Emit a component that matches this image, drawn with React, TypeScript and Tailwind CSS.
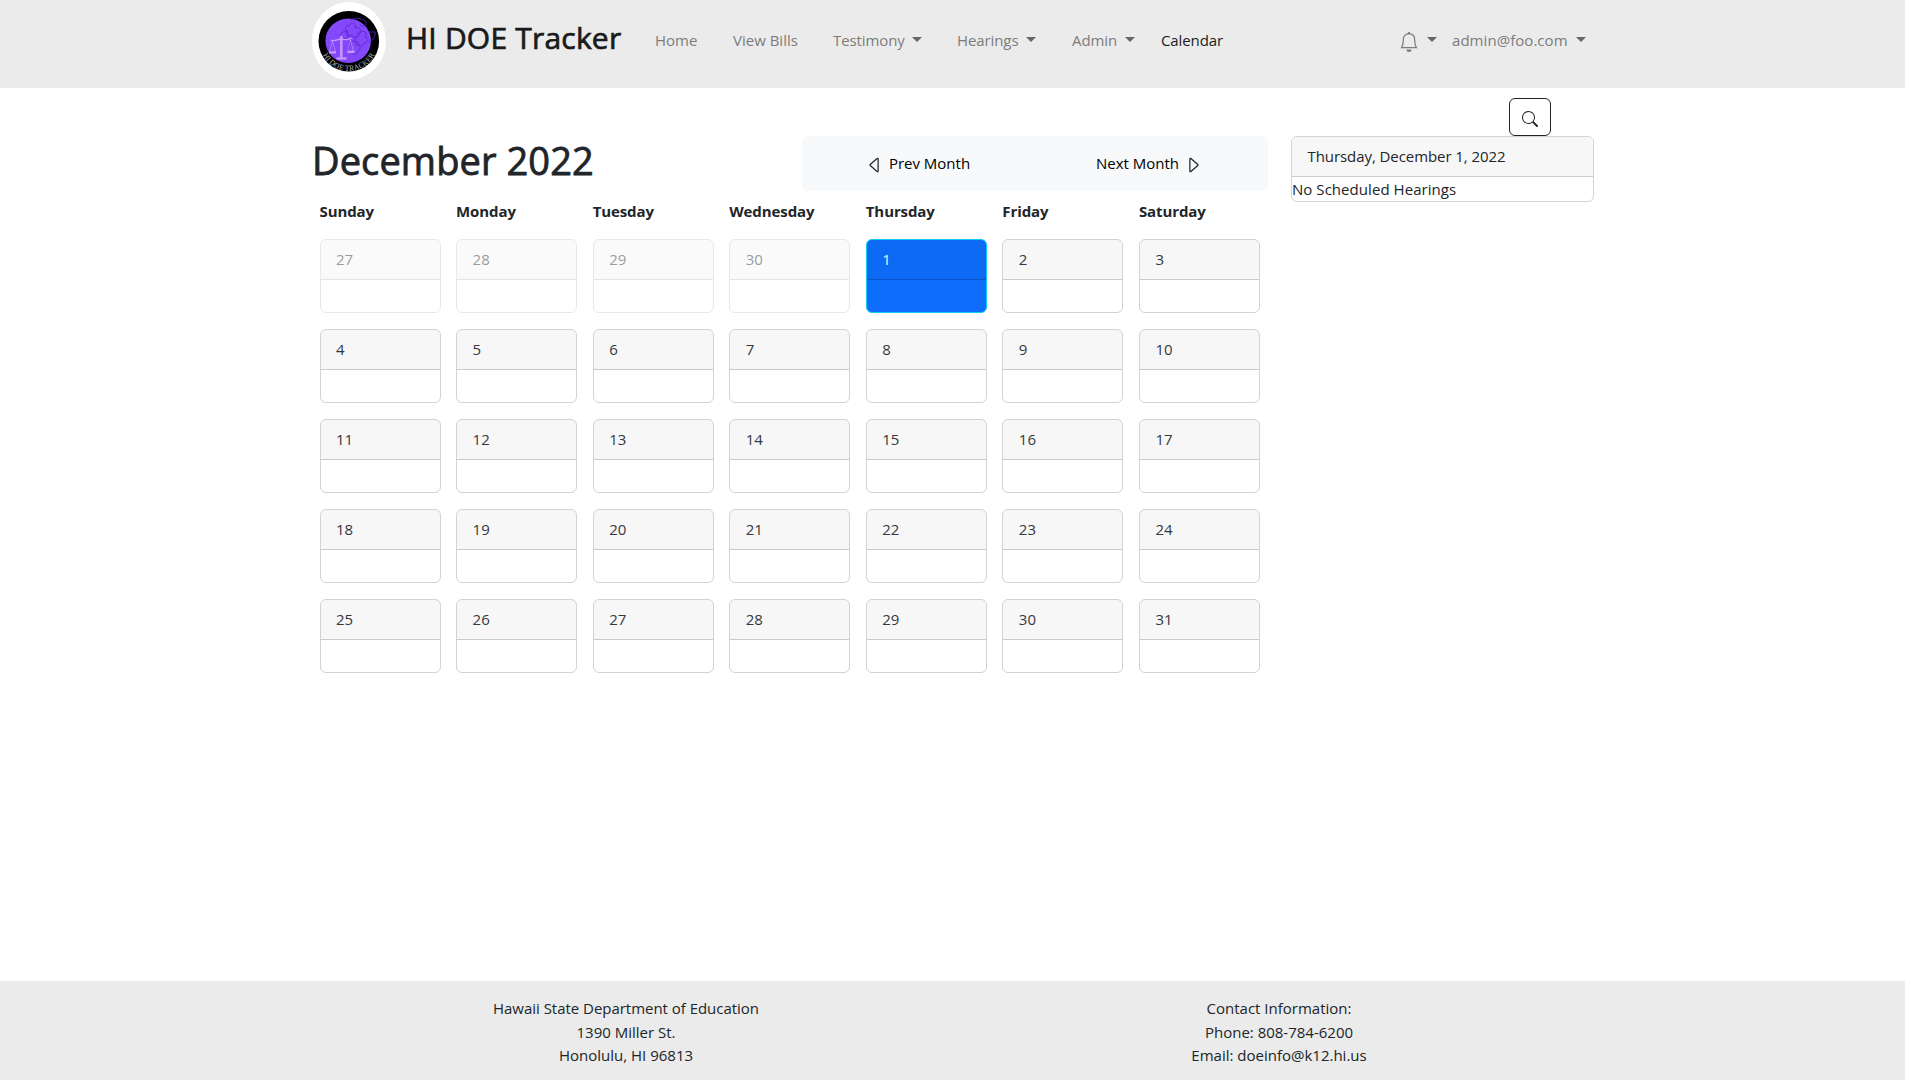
import React from "react";
import { BsBell, BsCaretLeft, BsCaretRight, BsSearch } from "react-icons/bs";

const weekdays = ["Sunday", "Monday", "Tuesday", "Wednesday", "Thursday", "Friday", "Saturday"];

type Day = { label: number; kind: "outside" | "selected" | "normal" };

const days: Day[] = [
  ...[27, 28, 29, 30].map((label): Day => ({ label, kind: "outside" })),
  ...Array.from({ length: 31 }, (_, i): Day => ({ label: i + 1, kind: i === 0 ? "selected" : "normal" })),
];

const cardStyles = {
  outside: "border-[#d3d3d3] bg-white text-[#212529] opacity-50",
  selected: "border-[#0dcaf0] bg-[#0d6efd] text-white",
  normal: "border-[#d3d3d3] bg-white text-[#212529]",
};

function Caret() {
  return <span className="-mt-[2px] h-0 w-0 border-x-[5px] border-t-[5px] border-x-transparent border-t-[#666]" />;
}

function Logo() {
  return (
    <svg className="h-[78px] w-[74px]" viewBox="0 0 74 78">
      <defs>
        <path id="motto" d="M10 46 A 27.500 27.500 0 0 0 63.500 46" />
      </defs>
      <ellipse cx="37" cy="39" rx="37" ry="39" fill="#fff" />
      <circle cx="36.8" cy="39.2" r="30.3" fill="#000" />
      <ellipse cx="36.2" cy="38.8" rx="22.8" ry="22.2" fill="#8448fb" />
      <g fill="none" stroke="#5a22c8" strokeWidth="0.8">
        <path d="M37 24c3-6 8-2 6 2c5-2 8 3 3 5c2 4-4 6-6 2c-4 3-8-1-4-4c-4-1-3-6 1-5z" />
        <path d="M48 31c4-4 8 0 5 4c4 1 4 6-1 6c-1 4-6 3-6-1c-4 0-4-5 0-6z" />
        <path d="M38 41c3-4 7-1 6 2c4-1 6 4 2 6c0 4-5 4-6 1c-4 1-6-3-3-5z" />
        <path d="M30 31c2-3 6-2 6 1c2 3-2 6-4 4c-4 0-5-3-2-5z" />
        <path d="M39 18c4-3 12-2 15 2c2 4-3 5-6 3M57 30h6c1 4-2 8-6 10" />
      </g>
      <g stroke="#c99bff" strokeWidth="1.3" fill="none">
        <path d="M18.500 38c4 2 7-1 10.500-1s6.500 2 10.500-1" />
        <path d="M29.300 34v22" strokeWidth="2.400" />
        <path d="M24.500 56.500h10" strokeWidth="2.200" />
        <path d="M20.500 39l-3 11M20.500 39l3 11M38.500 38l-3 11M38.500 38l3 11" strokeWidth="0.6" />
        <path d="M17 50.300h7M35.500 49.800h7" strokeWidth="2.200" />
      </g>
      <text fill="#b5b5b5" fontSize="8" fontFamily="Liberation Serif, serif">
        <textPath href="#motto" startOffset="50%" textAnchor="middle" dominantBaseline="middle" textLength="60" lengthAdjust="spacingAndGlyphs">
          HI DOE TRACKER
        </textPath>
      </text>
    </svg>
  );
}

function Header() {
  return (
    <header className="flex h-[88px] items-start bg-[#ebebeb] pl-[312px] text-[#7c7c7c]">
      <div className="mt-[2px]">
        <Logo />
      </div>
      <h1 className="mt-[16px] ml-[20px] w-[249px] text-[30px] leading-[44px] font-medium tracking-[0.2px] whitespace-nowrap text-[#1a1a1a] [-webkit-text-stroke:0.7px_#1a1a1a]">
        HI DOE Tracker
      </h1>
      <nav className="mt-[28px] flex leading-6 whitespace-nowrap">
        <a className="w-[78px]">Home</a>
        <a className="w-[100px]">View Bills</a>
        <a className="flex w-[124px] items-center gap-[7px] tracking-[-0.1px]">Testimony <Caret /></a>
        <a className="flex w-[115px] items-center gap-[8px] tracking-[-0.1px]">Hearings <Caret /></a>
        <a className="flex w-[89px] items-center gap-[8px] tracking-[-0.1px]">Admin <Caret /></a>
        <a className="w-[238px] tracking-[-0.1px] text-[#1c1c1c]">Calendar</a>
        <a className="flex w-[53px] items-center gap-[8px]"><BsBell className="mt-[4px] size-5" /><Caret /></a>
        <a className="flex items-center gap-2 tracking-[0.05px]">admin@foo.com <Caret /></a>
      </nav>
    </header>
  );
}

function DayCard({ day }: { day: Day }) {
  return (
    <div className={`h-[74.25px] overflow-hidden rounded-md border ${cardStyles[day.kind]}`}>
      <div className="h-[40.5px] border-b border-black/18 bg-black/3 px-[15.5px] pt-[7.5px] leading-6">
        <span className="opacity-90">{day.label}</span>
      </div>
    </div>
  );
}

function Calendar() {
  return (
    <section className="w-[956px] pt-[48px]">
      <div className="flex h-[55px] justify-between">
        <h2 className="text-[38px] leading-[48px] font-medium tracking-[0.1px] whitespace-nowrap [-webkit-text-stroke:0.8px_#212529]">
          December 2022
        </h2>
        <div className="flex w-[466px] items-center rounded-md bg-[#f8f9fa] text-black">
          <button className="flex w-[233px] items-center justify-center gap-[4px] pr-[2px]">
            <BsCaretLeft className="mt-[2px] size-5 text-[#212529]" />
            Prev Month
          </button>
          <button className="flex w-[233px] items-center justify-center gap-[4px] pr-[4px]">
            Next Month
            <BsCaretRight className="mt-[2px] size-5 text-[#212529]" />
          </button>
        </div>
      </div>
      <div className="mt-[8px] grid grid-cols-7 leading-6 font-bold tracking-[-0.1px]">
        {weekdays.map((name) => (
          <div key={name} className="pl-[7.5px]">{name}</div>
        ))}
      </div>
      <div className="mt-[15.5px] grid grid-cols-7 gap-x-[15.5px] gap-y-[15.75px] pr-[8px] pl-[7.5px]">
        {days.map((day, i) => (
          <DayCard key={i} day={day} />
        ))}
      </div>
    </section>
  );
}

function Hearings() {
  return (
    <aside className="ml-[23px] w-[303px] pt-[10px]">
      <button className="ml-[218px] flex h-[38px] w-[42px] items-center justify-center rounded-md border border-[#212529]">
        <BsSearch className="mt-[3px] size-4" />
      </button>
      <div className="h-[66px] overflow-hidden rounded-md border border-[#d3d3d3]">
        <div className="h-[40px] border-b border-[#cfcfcf] bg-[#f7f7f7] px-[15.5px] pt-[7px] leading-6 tracking-[-0.07px]">
          Thursday, December 1, 2022
        </div>
        <div className="leading-6 tracking-[0.05px]">No Scheduled Hearings</div>
      </div>
    </aside>
  );
}

function Footer() {
  return (
    <footer className="flex h-[99px] bg-[#ebebeb] pt-[16px] pl-[299.5px] text-center leading-[23.5px]">
      <div className="w-[653px]">
        <p className="tracking-[-0.03px]">Hawaii State Department of Education</p>
        <p>1390 Miller St.</p>
        <p>Honolulu, HI 96813</p>
      </div>
      <div className="w-[653px]">
        <p>Contact Information:</p>
        <p>Phone: 808-784-6200</p>
        <p>Email: doeinfo@k12.hi.us</p>
      </div>
    </footer>
  );
}

export default function App() {
  return (
    <div className="h-[1080px] w-full overflow-hidden bg-white">
      <div className="flex h-full w-[1905px] flex-col font-['Open_Sans',sans-serif] text-[15px] text-[#212529]">
        <Header />
        <main className="flex flex-1 items-start pl-[312px]">
          <Calendar />
          <Hearings />
        </main>
        <Footer />
      </div>
    </div>
  );
}
